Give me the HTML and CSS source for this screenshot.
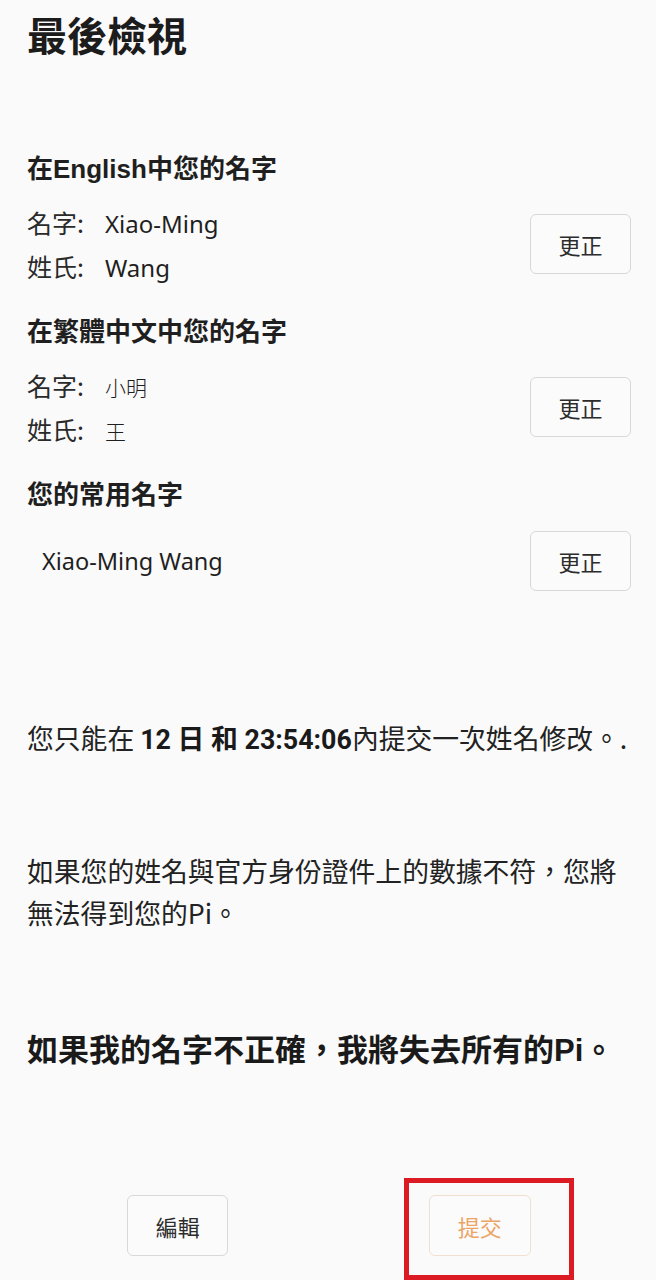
FILE: index.html
```html
<!DOCTYPE html>
<html lang="zh-Hant">
<head>
<meta charset="utf-8">
<title>最後檢視</title>
<link rel="stylesheet" href="styles.css">
</head>
<body>
<main class="page">
  <h1 class="title">最後檢視</h1>

  <section class="name-section">
    <h2 class="section-title">在English中您的名字</h2>
    <div class="name-row">
      <dl class="fields">
        <div class="field"><dt class="field-label">名字:</dt><dd class="field-value">Xiao-Ming</dd></div>
        <div class="field"><dt class="field-label">姓氏:</dt><dd class="field-value">Wang</dd></div>
      </dl>
      <button class="btn btn-edit" type="button">更正</button>
    </div>
  </section>

  <section class="name-section">
    <h2 class="section-title">在繁體中文中您的名字</h2>
    <div class="name-row">
      <dl class="fields">
        <div class="field"><dt class="field-label">名字:</dt><dd class="field-value field-value-cjk">小明</dd></div>
        <div class="field"><dt class="field-label">姓氏:</dt><dd class="field-value field-value-cjk">王</dd></div>
      </dl>
      <button class="btn btn-edit" type="button">更正</button>
    </div>
  </section>

  <section class="name-section">
    <h2 class="section-title">您的常用名字</h2>
    <div class="name-row name-row-single">
      <p class="full-name">Xiao-Ming Wang</p>
      <button class="btn btn-edit" type="button">更正</button>
    </div>
  </section>

  <p class="notice notice-limit">您只能在 <strong class="time">12 日 和 23:54:06</strong>內提交一次姓名修改。.</p>
  <p class="notice notice-id">如果您的姓名與官方身份證件上的數據不符，您將無法得到您的Pi。</p>
  <p class="warning">如果我的名字不正確，我將失去所有的Pi。</p>

  <div class="actions">
    <button class="btn btn-action" type="button">編輯</button>
    <span class="highlight">
      <button class="btn btn-action btn-submit" type="button">提交</button>
    </span>
  </div>
</main>
</body>
</html>
```

FILE: styles.css
```css
* {
  box-sizing: border-box;
}

html, body {
  margin: 0;
  padding: 0;
  background: #fafafa;
}

body {
  font-family: "Noto Sans", "Noto Sans CJK TC", sans-serif;
  color: #222;
}

.page {
  padding: 10px 25px 0 27px;
  height: 1280px;
  overflow: hidden;
}

.title {
  margin: 0 0 91px;
  font-family: "Noto Sans CJK TC", sans-serif;
  font-size: 40px;
  font-weight: 700;
  line-height: 48px;
  color: #1c1c1c;
}

.name-section {
  margin-bottom: 24px;
}

.section-title {
  margin: 0 0 13px;
  padding-top: 2px;
  font-family: "Liberation Sans", "Noto Sans CJK TC", sans-serif;
  font-size: 26px;
  font-weight: 700;
  line-height: 36px;
  color: #1f1f1f;
}

.name-row {
  display: flex;
  align-items: center;
  justify-content: space-between;
}

.name-row-single {
  padding-top: 5px;
}

.fields {
  margin: 0;
}

.field {
  display: flex;
  align-items: baseline;
  height: 44px;
  line-height: 44px;
}

.field-label {
  width: 78px;
  font-family: "Noto Sans CJK TC", sans-serif;
  font-size: 25px;
  color: #2a2a2a;
}

.field-value {
  margin: 0;
  font-size: 24px;
  color: #1f1f1f;
}

.field-value-cjk {
  font-family: "Noto Sans CJK TC", sans-serif;
  font-size: 21px;
  font-weight: 300;
}

.full-name {
  margin: 0 0 0 15px;
  font-size: 23.5px;
  line-height: 44px;
  color: #1f1f1f;
}

.btn {
  display: flex;
  align-items: center;
  justify-content: center;
  width: 101px;
  height: 60px;
  padding: 0;
  border: 1.5px solid #d8d8d8;
  border-radius: 6px;
  background: #fbfbfb;
  font-family: "Noto Sans CJK TC", sans-serif;
  font-size: 22px;
  color: #2c2c2c;
}

.notice {
  margin: 0;
  font-family: "Noto Sans CJK TC", sans-serif;
  font-size: 26.8px;
  line-height: 42px;
  color: #222;
}

.notice-limit {
  margin-top: 126px;
  white-space: nowrap;
}

.time {
  font-family: Roboto, "Noto Sans CJK TC", sans-serif;
  font-weight: 700;
  color: #1a1a1a;
}

.notice-id {
  margin-top: 89px;
}

.warning {
  margin: 96px 0 0;
  font-family: "Liberation Sans", "Noto Sans CJK TC", sans-serif;
  font-size: 31px;
  font-weight: 700;
  line-height: 42px;
  color: #1a1a1a;
}

.actions {
  display: flex;
  justify-content: space-around;
  margin-top: 123px;
}

.btn-action {
  height: 61px;
}

.highlight {
  position: relative;
  display: block;
}

.highlight::after {
  content: "";
  position: absolute;
  left: -25px;
  top: -17px;
  width: 160px;
  height: 92px;
  border: 5px solid #dc1a24;
  pointer-events: none;
}

.btn-submit {
  width: 102px;
  border-color: #f1e0d0;
  color: #eba466;
}
```
